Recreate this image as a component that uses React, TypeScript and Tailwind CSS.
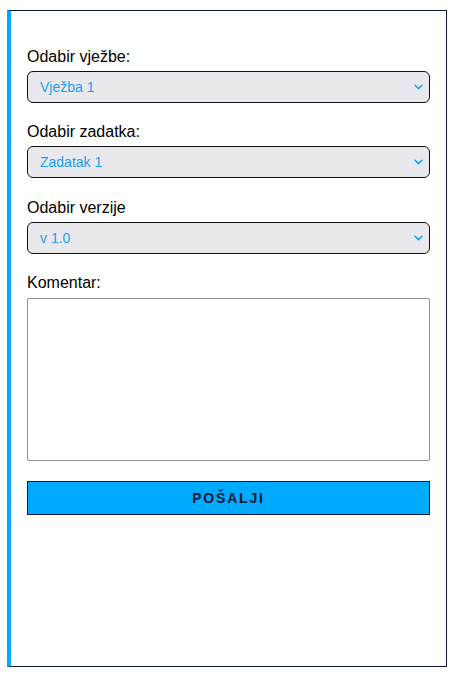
import React from "react";

function Chevron() {
  return (
    <svg
      className="pointer-events-none absolute right-[7px] top-1/2 -translate-y-1/2"
      width="9"
      height="6"
      viewBox="0 0 9 6"
      fill="none"
    >
      <path d="M1 1.2 L4.5 4.6 L8 1.2" stroke="#1a9ff0" strokeWidth="1.5" strokeLinecap="round" strokeLinejoin="round" />
    </svg>
  );
}

function Select({ value }: { value: string }) {
  return (
    <div className="relative h-8 w-full">
      <select
        defaultValue={value}
        className="h-8 w-full appearance-none rounded-[6px] border border-[#111] bg-[#e9e9ed] pl-3 text-[14px] leading-[30px] text-[#1a9ff0] outline-none"
        style={{ fontFamily: '"Liberation Sans", Arial, sans-serif' }}
      >
        <option>{value}</option>
      </select>
      <Chevron />
    </div>
  );
}

export default function App() {
  return (
    <div
      className="bg-white pl-[7px] pt-[10px]"
      style={{ fontFamily: '"Liberation Sans", Arial, sans-serif' }}
    >
      <div className="box-border flex h-[657px] w-[440px] flex-col border border-l-4 border-[#0b1a3a] border-l-[#00aaff] px-4 pt-[37px]">
        <label className="block text-[16px] leading-[18px] text-black">Odabir vježbe:</label>
        <div className="mt-[5px]">
          <Select value="Vježba 1" />
        </div>

        <label className="mt-[20px] block text-[16px] leading-[18px] text-black">Odabir zadatka:</label>
        <div className="mt-[5px]">
          <Select value="Zadatak 1" />
        </div>

        <label className="mt-[21px] block text-[16px] leading-[18px] text-black">Odabir verzije</label>
        <div className="mt-[5px]">
          <Select value="v 1.0" />
        </div>

        <label className="mt-[20px] block text-[16px] leading-[18px] text-black">Komentar:</label>
        <textarea className="mt-[6px] block h-[163px] w-full resize-none rounded-[2px] border border-[#8f8f9d] bg-white outline-none" />

        <button className="mt-5 h-[34px] w-full border border-[#0b1a3a] bg-[#00aaff] text-[14px] font-bold tracking-[1.8px] text-[#0b1a33]">
          POŠALJI
        </button>
      </div>
    </div>
  );
}
